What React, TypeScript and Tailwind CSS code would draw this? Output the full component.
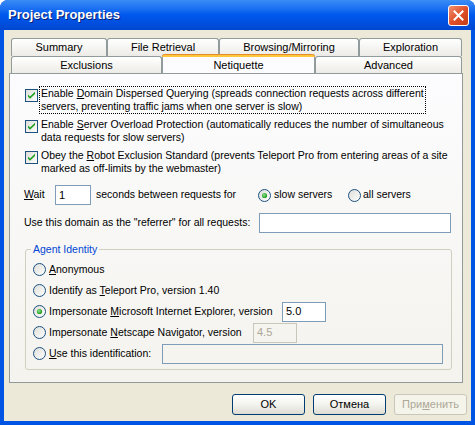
import type { ReactNode } from "react";

const font = { fontFamily: '"Liberation Sans", Arial, sans-serif' };

function U({ children }: { children: ReactNode }) {
  return <span className="underline underline-offset-[1px]">{children}</span>;
}

function CheckBox() {
  return (
    <svg width="13" height="13" viewBox="0 0 13 13" className="shrink-0">
      <defs>
        <linearGradient id="cbg" x1="0" y1="0" x2="1" y2="1">
          <stop offset="0" stopColor="#dcdcd7" />
          <stop offset="1" stopColor="#ffffff" />
        </linearGradient>
      </defs>
      <rect x="0.5" y="0.5" width="12" height="12" fill="url(#cbg)" stroke="#1c5180" />
      <path d="M3 5.5 L5 7.5 L10 2.8 L10 5 L5 9.8 L3 7.8 Z" fill="#21a121" />
    </svg>
  );
}

function Radio({ on = false }: { on?: boolean }) {
  return (
    <svg width="13" height="13" viewBox="0 0 13 13" className="shrink-0">
      <defs>
        <linearGradient id="rbg" x1="0" y1="0" x2="1" y2="1">
          <stop offset="0" stopColor="#dcdcd7" />
          <stop offset="1" stopColor="#ffffff" />
        </linearGradient>
        <radialGradient id="rdot" cx="0.4" cy="0.4" r="0.6">
          <stop offset="0" stopColor="#8ee08e" />
          <stop offset="1" stopColor="#1b9b1b" />
        </radialGradient>
      </defs>
      <circle cx="6.5" cy="6.5" r="6" fill="url(#rbg)" stroke="#1c5180" />
      {on ? <circle cx="6.5" cy="6.5" r="2.6" fill="url(#rdot)" /> : null}
    </svg>
  );
}

function Tab({ w, label, active = false }: { w: number; label: string; active?: boolean }) {
  if (active) {
    return (
      <div
        className="relative z-10 -mt-[2px] flex h-[19px] items-start justify-center rounded-t-[3px] border-x border-[#919b9c] bg-[#fcfcfe] pt-[2px] text-[11px] text-black"
        style={{ width: w }}
      >
        <div className="absolute inset-x-[-1px] top-0 h-[3px] rounded-t-[3px] border-t border-[#e68b2c] bg-[#ffc83c]" />
        <span className="mt-[1px]">{label}</span>
      </div>
    );
  }
  return (
    <div
      className="flex h-[18px] items-center justify-center rounded-t-[3px] border border-b-0 border-[#919b9c] bg-gradient-to-b from-white to-[#ecebe6] text-[11px] text-black"
      style={{ width: w }}
    >
      {label}
    </div>
  );
}

function TextBox({ w, value = "", disabled = false, dim = false }: { w: number; value?: string; disabled?: boolean; dim?: boolean }) {
  return (
    <div
      className={
        "flex h-[20px] shrink-0 items-center border px-[3px] text-[11px] " +
        (disabled
          ? "border-[#c9c7ba] bg-[#f5f4ef] text-[#aca899]"
          : dim
          ? "border-[#7f9db9] bg-[#f5f4ef]"
          : "border-[#7f9db9] bg-white text-black")
      }
      style={{ width: w }}
    >
      {value}
    </div>
  );
}

function Button({ children, disabled = false }: { children: ReactNode; disabled?: boolean }) {
  return (
    <div
      className={
        "flex h-[21px] w-[73px] items-center justify-center rounded-[3px] border text-[11px] " +
        (disabled
          ? "border-[#c9c7ba] bg-[#f5f4ea] text-[#aca899]"
          : "border-[#003c74] bg-gradient-to-b from-white via-[#f3f3ef] to-[#dedcd2] text-black")
      }
    >
      <span>{children}</span>
    </div>
  );
}

function CheckItem({ lines, focus = false }: { lines: ReactNode[]; focus?: boolean }) {
  return (
    <div className="ml-[1px] flex items-start gap-[1px]">
      <div className="mt-[3px]">
        <CheckBox />
      </div>
      <div
        className={
          "whitespace-nowrap border px-[1px] text-[10.5px] leading-[13px] " +
          (focus ? "border-dotted border-black" : "border-transparent")
        }
      >
        {lines.map((l, i) => (
          <div key={i}>{l}</div>
        ))}
      </div>
    </div>
  );
}

function RadioRow({ on = false, label, labelW, box }: { on?: boolean; label: ReactNode; labelW?: number; box?: ReactNode }) {
  return (
    <div className="flex h-[21px] items-center">
      <Radio on={on} />
      <span className="ml-[3px] shrink-0 whitespace-nowrap text-[10.5px]" style={labelW ? { width: labelW } : undefined}>
        {label}
      </span>
      {box}
    </div>
  );
}

export default function App() {
  return (
    <div className="h-[425px] w-[475px] overflow-hidden rounded-t-[8px] bg-[#0054e3] select-none" style={font}>
      {/* title bar */}
      <div className="flex h-[30px] items-center justify-between bg-gradient-to-b from-[#3a8cf5] via-[#0058ee] to-[#0047d0] pl-[8px] pr-[6px]">
        <span className="text-[13px] font-bold text-white [text-shadow:1px_1px_0_#0a1e6e]">
          Project Properties
        </span>
        <div className="flex h-[21px] w-[21px] items-center justify-center rounded-[3px] border border-white bg-gradient-to-br from-[#f09070] via-[#e0502a] to-[#c43c14]">
          <svg width="11" height="11" viewBox="0 0 11 11">
            <path d="M1.5 1.5 L9.5 9.5 M9.5 1.5 L1.5 9.5" stroke="white" strokeWidth="2" strokeLinecap="square" />
          </svg>
        </div>
      </div>

      {/* client */}
      <div className="mx-[4px] flex h-[391px] flex-col bg-[#ece9d8] pl-[5px] pr-[3px] pt-[8px]">
        {/* tabs */}
        <div className="flex pl-[2px]">
          <Tab w={96} label="Summary" />
          <Tab w={112} label="File Retrieval" />
          <Tab w={140} label="Browsing/Mirroring" />
          <Tab w={103} label="Exploration" />
        </div>
        <div className="flex pl-[2px]">
          <Tab w={151} label="Exclusions" />
          <Tab w={153} label="Netiquette" active />
          <Tab w={147} label="Advanced" />
        </div>

        {/* panel */}
        <div className="-mt-[1px] flex h-[310px] w-[454px] flex-col border border-[#919b9c] bg-gradient-to-b from-[#fcfcfe] to-[#f4f3ee] pl-[14px] pt-[12px] text-black">
          <div className="flex flex-col gap-[3px]">
            <CheckItem
              focus
              lines={[
                <>
                  Enable <U>D</U>omain Dispersed Querying (spreads connection requests across different
                </>,
                "servers, preventing traffic jams when one server is slow)",
              ]}
            />
            <CheckItem
              lines={[
                <>
                  Enable <U>S</U>erver Overload Protection (automatically reduces the number of simultaneous
                </>,
                "data requests for slow servers)",
              ]}
            />
            <CheckItem
              lines={[
                <>
                  Obey the <U>R</U>obot Exclusion Standard (prevents Teleport Pro from entering areas of a site
                </>,
                "marked as off-limits by the webmaster)",
              ]}
            />
          </div>

          <div className="mt-[9px] flex h-[20px] items-center whitespace-nowrap text-[10.5px]">
            <span className="w-[31px]">
              <U>W</U>ait
            </span>
            <TextBox w={36} value="1" />
            <span className="ml-[5px] w-[162px]">seconds between requests for</span>
            <Radio on />
            <span className="ml-[3px] w-[74px]">slow servers</span>
            <Radio />
            <span className="ml-[2px]">all servers</span>
          </div>

          <div className="mt-[8px] flex h-[20px] items-center whitespace-nowrap text-[10.5px]">
            <span className="w-[235px]">Use this domain as the "referrer" for all requests:</span>
            <TextBox w={192} />
          </div>

          {/* group box */}
          <div className="relative ml-[1px] mt-[16px] h-[121px] w-[427px] rounded-[3px] border border-[#d0d0bf] pl-[7px] pt-[9px]">
            <span className="absolute -top-[8px] left-[5px] bg-[#f8f7f4] px-[2px] text-[10.5px] text-[#0046d5]">
              Agent Identity
            </span>
            <RadioRow
              label={
                <>
                  <U>A</U>nonymous
                </>
              }
            />
            <RadioRow
              label={
                <>
                  Identify as <U>T</U>eleport Pro, version 1.40
                </>
              }
            />
            <RadioRow
              on
              labelW={233}
              label={
                <>
                  Impersonate <U>M</U>icrosoft Internet Explorer, version
                </>
              }
              box={<TextBox w={44} value="5.0" />}
            />
            <RadioRow
              labelW={204}
              label={
                <>
                  Impersonate <U>N</U>etscape Navigator, version
                </>
              }
              box={<TextBox w={44} value="4.5" disabled />}
            />
            <RadioRow
              labelW={113}
              label={
                <>
                  <U>U</U>se this identification:
                </>
              }
              box={<TextBox w={281} dim />}
            />
          </div>
        </div>

        {/* buttons */}
        <div className="mt-[11px] flex justify-end gap-[8px] pr-[1px]">
          <Button>OK</Button>
          <Button>Отмена</Button>
          <Button disabled>
            При<U>м</U>енить
          </Button>
        </div>
      </div>
    </div>
  );
}
